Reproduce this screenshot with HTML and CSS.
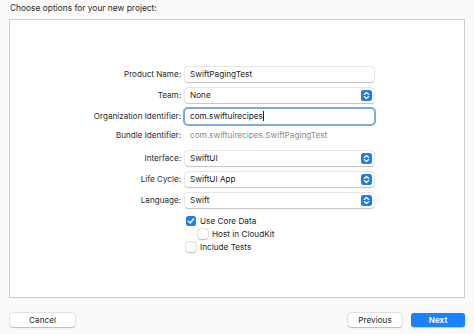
FILE: index.html
```html
<!DOCTYPE html>
<html>
<head>
<meta charset="utf-8">
<link rel="stylesheet" href="styles.css">
</head>
<body>
<div class="sheet">
  <div class="title">Choose options for your new project:</div>
  <div class="panel">
    <div class="form">
      <div class="label">Product Name:</div>
      <div class="field text">SwiftPagingTest</div>

      <div class="label">Team:</div>
      <div class="field popup">None<span class="stepper"><svg viewBox="0 0 11 11" width="11" height="11"><path d="M3.3 4.4 L5.5 2.4 L7.7 4.4 M3.3 6.6 L5.5 8.6 L7.7 6.6" fill="none" stroke="#fff" stroke-width="1.3" stroke-linecap="round" stroke-linejoin="round"/></svg></span></div>

      <div class="label">Organization Identifier:</div>
      <div class="field text focus">com.swiftuirecipes<span class="caret"></span></div>

      <div class="label short">Bundle Identifier:</div>
      <div class="plain short">com.swiftuirecipes.SwiftPagingTest</div>

      <div class="label">Interface:</div>
      <div class="field popup">SwiftUI<span class="stepper"><svg viewBox="0 0 11 11" width="11" height="11"><path d="M3.3 4.4 L5.5 2.4 L7.7 4.4 M3.3 6.6 L5.5 8.6 L7.7 6.6" fill="none" stroke="#fff" stroke-width="1.3" stroke-linecap="round" stroke-linejoin="round"/></svg></span></div>

      <div class="label">Life Cycle:</div>
      <div class="field popup">SwiftUI App<span class="stepper"><svg viewBox="0 0 11 11" width="11" height="11"><path d="M3.3 4.4 L5.5 2.4 L7.7 4.4 M3.3 6.6 L5.5 8.6 L7.7 6.6" fill="none" stroke="#fff" stroke-width="1.3" stroke-linecap="round" stroke-linejoin="round"/></svg></span></div>

      <div class="label">Language:</div>
      <div class="field popup">Swift<span class="stepper"><svg viewBox="0 0 11 11" width="11" height="11"><path d="M3.3 4.4 L5.5 2.4 L7.7 4.4 M3.3 6.6 L5.5 8.6 L7.7 6.6" fill="none" stroke="#fff" stroke-width="1.3" stroke-linecap="round" stroke-linejoin="round"/></svg></span></div>

      <div class="label"></div>
      <div class="checks">
        <div class="check"><span class="box on"><svg viewBox="0 0 10 10" width="10" height="10"><path d="M2.4 5.2 L4.2 7 L7.6 2.9" fill="none" stroke="#fff" stroke-width="1.5" stroke-linecap="round" stroke-linejoin="round"/></svg></span>Use Core Data</div>
        <div class="check indent"><span class="box"></span>Host in CloudKit</div>
        <div class="check"><span class="box"></span>Include Tests</div>
      </div>
    </div>
  </div>
  <div class="buttons">
    <div class="btn cancel">Cancel</div>
    <div class="right">
      <div class="btn prev">Previous</div>
      <div class="btn next">Next</div>
    </div>
  </div>
</div>
</body>
</html>
```
FILE: styles.css
```css
html, body {
  margin: 0;
  padding: 0;
  background: #fafafa;
}
body {
  width: 474px;
  height: 334px;
  overflow: hidden;
  font-family: Inter, "Liberation Sans", sans-serif;
  color: #262626;
}
.sheet {
  padding: 3px 10px 0 9px;
}
.title {
  font-size: 8.4px;
  height: 16px;
  line-height: 11px;
  padding-left: 1px;
  color: #2a2a2a;
}
.panel {
  box-sizing: border-box;
  width: 456px;
  height: 279px;
  background: #fff;
  border: 1px solid #cdcdcd;
  padding: 47px 0 0 0;
}
.form {
  display: grid;
  grid-template-columns: 171px 189px;
  column-gap: 4px;
  row-gap: 6px;
  grid-auto-rows: 15px;
}
.form .short { height: 11px; }
.label {
  font-size: 8.1px;
  text-align: right;
  line-height: 15px;
  color: #2b2b2b;
}
.label.short { line-height: 11px; }
.field {
  position: relative;
  box-sizing: border-box;
  height: 15px;
  background: #fff;
  border-radius: 3px;
  box-shadow: 0 0 0 0.5px rgba(0,0,0,0.14), 0 0.8px 1.2px rgba(0,0,0,0.18);
  font-size: 8.2px;
  line-height: 15px;
  padding-left: 5px;
  color: #222;
}
.field.focus {
  box-shadow: 0 0 0 2px #7ea9e3;
}
.caret {
  display: inline-block;
  width: 0.8px;
  height: 10px;
  background: #222;
  vertical-align: -2px;
  margin-left: 0.5px;
}
.plain {
  font-size: 8.2px;
  line-height: 11px;
  color: #8b8b8b;
  padding-left: 5px;
}
.stepper {
  position: absolute;
  right: 2px;
  top: 2px;
  width: 11px;
  height: 11px;
  border-radius: 2.5px;
  background: #1f7cf4;
  display: flex;
}
.checks {
  grid-row: span 3;
  display: flex;
  flex-direction: column;
  gap: 3px;
  padding-top: 2px;
  padding-left: 1px;
}
.check {
  display: flex;
  align-items: center;
  height: 10px;
  font-size: 8.2px;
  color: #262626;
  gap: 4px;
}
.check.indent { padding-left: 12px; }
.box {
  box-sizing: border-box;
  width: 10px;
  height: 10px;
  border-radius: 2.5px;
  background: #fff;
  box-shadow: 0 0 0 0.5px rgba(0,0,0,0.22), 0 0.6px 1px rgba(0,0,0,0.15);
  display: flex;
}
.box.on {
  background: #1f7cf4;
  box-shadow: none;
}
.buttons {
  display: flex;
  justify-content: space-between;
  padding-top: 15px;
  padding-left: 1px;
  width: 455px;
}
.right {
  display: flex;
  gap: 9px;
}
.btn {
  box-sizing: border-box;
  height: 14px;
  border-radius: 3px;
  font-size: 8.2px;
  line-height: 14px;
  text-align: center;
  background: #fff;
  box-shadow: 0 0 0 0.5px rgba(0,0,0,0.14), 0 0.8px 1.2px rgba(0,0,0,0.2);
  color: #262626;
}
.cancel { width: 65px; }
.prev { width: 54px; }
.next {
  width: 54px;
  background: #1a82fb;
  color: #fff;
  font-weight: 600;
  box-shadow: 0 0.5px 1px rgba(0,0,0,0.2);
}
```
